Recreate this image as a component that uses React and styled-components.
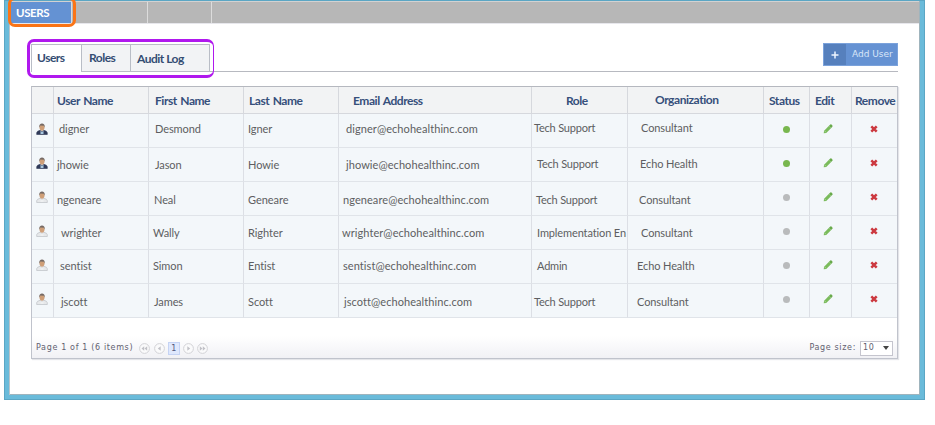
import React from 'react';
import styled, { createGlobalStyle } from 'styled-components';

const GlobalStyle = createGlobalStyle`
  * { box-sizing: border-box; }
  html, body { margin: 0; background: #fff; }
  body { width: 935px; height: 425px; overflow: hidden; font-family: Lato, "Noto Sans", sans-serif; }
`;

const Frame = styled.div`
  margin-left: 4px;
  width: 921px;
  height: 400px;
  border: solid #6abbda;
  border-width: 0 5px 5px;
  box-shadow: inset 1px 0 #b9c4ca, inset -1px -1px #9fb4bd;
  outline: 1px solid #5ba6c4;
  outline-offset: -1px;
  position: relative;
`;

const TopBar = styled.nav`
  display: flex;
  height: 24px;
  margin: 0 1px 0 0;
  border-top: 2px solid #d2d2d2;
  border-bottom: 1px solid #e7e7ec;
  background: #b7b7b7;
`;

const TopItem = styled.div`
  width: ${p => p.$w}px;
  padding-left: 7px;
  border-right: 1px solid #dcdcdc;
  background: ${p => (p.$active ? '#6492d3' : 'transparent')};
  color: #fff;
  font-size: 11.5px;
  font-weight: 700;
  line-height: 22px;
  letter-spacing: -0.4px;
`;

const Ring = styled.div`
  position: absolute;
  left: ${p => p.$x}px;
  top: ${p => p.$y}px;
  width: ${p => p.$w}px;
  height: ${p => p.$h}px;
  border: ${p => p.$t}px solid ${p => p.$color};
  border-right-width: ${p => p.$right || p.$t}px;
  border-radius: 7px;
`;

const Content = styled.main`
  padding: 20px 22px 0;
`;

const Toolbar = styled.div`
  display: flex;
  height: 28px;
  width: 867px;
  background: linear-gradient(#b7b9c0, #b7b9c0) right bottom / 817px 1px no-repeat;
`;

const Tab = styled.div`
  width: ${p => p.$w}px;
  height: 28px;
  padding: ${p => p.$top}px 0 0 ${p => p.$left}px;
  border: solid #b9bdc6;
  border-width: 1px 1px ${p => (p.$active ? 0 : 1)}px ${p => (p.$active ? 1 : 0)}px;
  background: ${p => (p.$active ? '#fff' : '#f2f3f5')};
  color: #344d73;
  font-size: 12px;
  font-weight: 700;
  line-height: 16px;
  letter-spacing: -0.5px;
  white-space: nowrap;
`;

const AddButton = styled.button`
  display: flex;
  width: 75px;
  height: 23px;
  margin: -1px 0 0 auto;
  padding: 0;
  border: 1px solid #7ba2db;
  background: #6592d3;
  color: #d9e6f8;
  font: 9px/21px "DejaVu Sans", sans-serif;
  white-space: nowrap;
`;

const AddIcon = styled.span`
  display: flex;
  align-items: center;
  justify-content: center;
  width: 22px;
  height: 21px;
  margin-right: 6px;
  background: #5680bd;
`;

const Grid = styled.section`
  width: 867px;
  height: 273px;
  margin-top: 14px;
  border: 1px solid #c0c3cc;
  border-top-color: #b5b8bf;
  box-shadow: 1px 1px 1px #e4e5e9;
`;

const GridRow = styled.div`
  display: grid;
  grid-template-columns: 22px 95px 95px 95px 193px 96px 136px 46px 42px 45px;
  height: ${p => p.$h}px;
  background: ${p => (p.$head ? '#f2f3f4' : '#f3f7fa')};
`;

const Cell = styled.div`
  min-width: 0;
  padding: ${p => p.$top || 0}px 0 0 ${p => p.$left || 0}px;
  border-right: 1px solid #dcdfe5;
  border-bottom: 1px solid #e0e4e9;
  color: #5d5e61;
  font-size: 11px;
  letter-spacing: ${p => p.$ls ?? 0}px;
  line-height: 14px;
  white-space: nowrap;
  &:last-child { border-right: 0; }
`;

const IconCell = styled(Cell)`
  display: flex;
  align-items: center;
  justify-content: center;
  padding: 0 ${p => p.$right || 0}px 3px 0;
`;

const HeadCell = styled(Cell)`
  padding-top: ${p => p.$top || 7}px;
  border-color: #d6d8dd;
  color: #364f7b;
  font-size: 12px;
  font-weight: 700;
  letter-spacing: -0.45px;
  word-spacing: 1px;
`;

const Dot = styled.span`
  width: 7px;
  height: 7px;
  border-radius: 50%;
  background: ${p => (p.$on ? '#78b74e' : '#b9bbbc')};
`;

const Pager = styled.footer`
  display: flex;
  align-items: center;
  height: 40px;
  padding: 20px 4px 0 4px;
  color: #626170;
  font: 8px/14px "DejaVu Sans", sans-serif;
  letter-spacing: 0.65px;
  background: linear-gradient(#fff 45%, #f1f1f5);
`;

const Pages = styled.div`
  display: flex;
  align-items: center;
  gap: 3.3px;
  margin-left: 6px;
`;

const Current = styled.span`
  width: 12px;
  height: 13px;
  border: 1px solid #c5d3f4;
  background: #dfe8fd;
  line-height: 11px;
  text-align: center;
  letter-spacing: 0;
  color: #55597a;
`;

const PageSize = styled.label`
  margin-left: auto;
  margin-right: 4px;
`;

const Select = styled.div`
  display: flex;
  align-items: center;
  justify-content: space-between;
  width: 33px;
  height: 15px;
  padding: 0 3px 0 2px;
  border: 1px solid #c5c5ce;
  background: #fff;
`;

const Avatar = ({ dark }) => (
  <svg width="12" height="12" viewBox="0 0 12 12">
    <path d="M.7 11.5V9.7Q.9 8 4 7.3L6 8.5l2-1.2q3.1.7 3.3 2.4v1.8z" fill={dark ? '#303a59' : '#e6e8ea'} stroke={dark ? '#303a59' : '#b5b8bd'} strokeWidth=".6" />
    <path d="m4.5 7.4 1.500 1.700 1.500-1.700V11h-3z" fill={dark ? '#a9c8df' : '#eef0f1'} />
    <ellipse cx="6" cy="4.600" rx="2.500" ry="3.100" fill="#cf9f78" />
    <path d="M3.300 4.700C2.800 1.800 4.400.5 6 .5s3.200 1.300 2.700 4.200L7.900 2.700 4.400 2.600z" fill="#766a64" />
  </svg>
);

const Pencil = () => (
  <svg width="10" height="10" viewBox="0 0 10 10">
    <path d="M.7 9.300 1.100 6.700 6 1.800l2.200 2.200-4.900 4.900z" fill="#7abb5b" />
    <path d="M6 1.800 7.300.5Q8.200.1 9 .9t.5 1.700L8.200 4z" fill="#68aa4a" />
    <path d="m1.600 6.900 1.500 1.500" stroke="#bddfb0" strokeWidth=".7" />
  </svg>
);

const Remove = () => (
  <svg width="8" height="8" viewBox="0 0 8 8">
    <path d="m1.300 1.300 5.400 5.400m0-5.400L1.300 6.700" stroke="#cc3940" strokeWidth="2.500" />
  </svg>
);

const PageArrow = ({ next, twice }) => (
  <svg width="11" height="11" viewBox="0 0 11 11">
    <circle cx="5.500" cy="5.500" r="4.900" fill="#fafafb" stroke="#d2d2d6" />
    <g transform={next ? 'translate(11 0) scale(-1 1)' : undefined} fill="#c1c1c7">
      {twice ? <path d="M2.500 5.500 5.200 3.300v4.400zm3 0 2.700-2.200v4.400z" /> : <path d="m3.800 5.500 2.900-2.300v4.600z" />}
    </g>
  </svg>
);

const heads = [[''], ['User Name', 3], ['First Name', 6], ['Last Name', 5], ['Email Address', 14], ['Role', 34], ['Organization', 27, 6], ['Status', 5], ['Edit', 5], ['Remove', 3]];

// Letter spacing of the text columns, from user name to organization.
const spacing = [-0.05, -0.1, -0.05, 0.07, -0.2, -0.1];

const rows = [
  { top: 8, cells: [['digner', 5], ['Desmond', 6], ['Igner', 4], ['digner@echohealthinc.com', 7], ['Tech Support', 2, -1], ['Consultant', 13, -1]], on: true },
  { top: 10, cells: [['jhowie', 3], ['Jason', 6], ['Howie', 4], ['jhowie@echohealthinc.com', 7], ['Tech Support', 5, -1], ['Echo Health', 12, -1]], on: true },
  { top: 11, cells: [['ngeneare', 3], ['Neal', 5], ['Geneare', 4], ['ngeneare@echohealthinc.com', 4], ['Tech Support', 4], ['Consultant', 11]] },
  { top: 10, cells: [['wrighter', 7], ['Wally', 4], ['Righter', 4], ['wrighter@echohealthinc.com', 3], ['Implementation En', 5], ['Consultant', 13]] },
  { top: 9, cells: [['sentist', 6], ['Simon', 4], ['Entist', 4], ['sentist@echohealthinc.com', 4], ['Admin', 5], ['Echo Health', 9]] },
  { top: 11, cells: [['jscott', 7], ['James', 5], ['Scott', 4], ['jscott@echohealthinc.com', 5], ['Tech Support', 2], ['Consultant', 9]] },
];

export default function App() {
  return (
    <>
      <GlobalStyle />
      <Frame>
        <TopBar>
          <TopItem $w={63} $active>USERS</TopItem>
          <TopItem $w={76} />
          <TopItem $w={64} />
        </TopBar>
        <Content>
          <Toolbar>
            <Tab $w={51} $left={5} $top={5} $active>Users</Tab>
            <Tab $w={49} $left={7} $top={5}>Roles</Tab>
            <Tab $w={79} $left={6} $top={6}>Audit Log</Tab>
            <AddButton>
              <AddIcon>
                <svg width="8" height="8"><path d="M4 .5v7M.5 4h7" stroke="#eef5ff" strokeWidth="1.500" /></svg>
              </AddIcon>
              Add User
            </AddButton>
          </Toolbar>
          <Grid>
            <GridRow $h={27} $head>
              {heads.map(([text, left, top], i) => <HeadCell key={i} $left={left} $top={top}>{text}</HeadCell>)}
            </GridRow>
            {rows.map((row, i) => (
              <GridRow key={i} $h={34}>
                <IconCell $right={1}><Avatar dark={row.on} /></IconCell>
                {row.cells.map(([text, left, dy = 0], j) => (
                  <Cell key={j} $left={left} $top={row.top + dy} $ls={text.length > 16 && j === 4 ? -0.12 : spacing[j]}>{text}</Cell>
                ))}
                <IconCell><Dot $on={row.on} /></IconCell>
                <IconCell $right={5}><Pencil /></IconCell>
                <IconCell $right={1}><Remove /></IconCell>
              </GridRow>
            ))}
            <Pager>
              <span>Page 1 of 1 (6 items)</span>
              <Pages>
                <PageArrow twice />
                <PageArrow />
                <Current>1</Current>
                <PageArrow next />
                <PageArrow next twice />
              </Pages>
              <PageSize>Page size:</PageSize>
              <Select>
                10
                <svg width="6" height="4"><path d="M0 0h6L3 4z" fill="#444" /></svg>
              </Select>
            </Pager>
          </Grid>
        </Content>
        <Ring $x={-1} $y={-3} $w={68} $h={30} $t={3} $color="#fb7416" />
        <Ring $x={18} $y={39} $w={187} $h={39} $t={3} $right={1} $color="#b018ee" />
      </Frame>
    </>
  );
}
